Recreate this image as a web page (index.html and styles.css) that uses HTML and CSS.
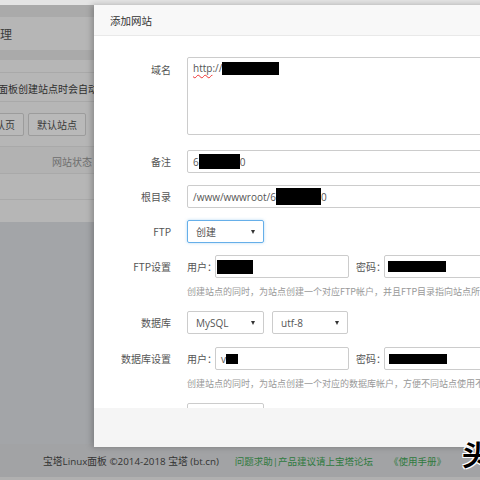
FILE: index.html
```html
<!DOCTYPE html>
<html>
<head>
<meta charset="utf-8">
<link rel="stylesheet" href="styles.css">
</head>
<body>
<div class="page">
  <div class="topstrip"></div>
  <div class="band"></div>
  <div class="titlebar"><span class="title">网站管理</span></div>
  <div class="band"></div>
  <div class="panel">
    <div class="prow p1"></div>
    <div class="prow p2"><span class="tip">宝塔面板创建站点时会自动创建默认页</span></div>
    <div class="prow p3"><span class="pbtn b1">默认页</span><span class="pbtn">默认站点</span></div>
    <div class="prow p4"><span class="th">网站状态</span></div>
    <div class="prow p5"></div>
    <div class="prow p6"></div>
  </div>
  <div class="rest"></div>
  <div class="footer">
    <span class="copy">宝塔Linux面板 ©2014-2018 宝塔 (bt.cn)</span>
    <span class="link l1">问题求助|产品建议请上宝塔论坛</span>
    <span class="link l2">《使用手册》</span>
  </div>
</div>

<div class="modal">
  <div class="mhead">添加网站</div>
  <div class="mbody">
    <div class="row r-ta">
      <label>域名</label>
      <div class="ta"><span class="spell">http</span>://<span class="redact rd-dom"></span></div>
    </div>
    <div class="row r-15">
      <label>备注</label>
      <div class="inp wide">6<span class="redact rd-ps"></span>0</div>
    </div>
    <div class="row">
      <label>根目录</label>
      <div class="inp wide">/www/wwwroot/6<span class="redact rd-path"></span>0</div>
    </div>
    <div class="row">
      <label>FTP</label>
      <div class="sel focus">创建<i class="arrow"></i></div>
    </div>
    <div class="row r-top">
      <label class="lt">FTP设置</label>
      <div class="field">
        <div class="pair">
          <span class="pl">用户：</span>
          <div class="inp user"><span class="redact rd-fu"></span></div>
          <span class="pl pw">密码：</span>
          <div class="inp pass"><span class="redact rd-fp"></span></div>
        </div>
        <div class="help">创建站点的同时，为站点创建一个对应FTP帐户，并且FTP目录指向站点所在目录</div>
      </div>
    </div>
    <div class="row r-13">
      <label>数据库</label>
      <div class="pair">
        <div class="sel">MySQL<i class="arrow"></i></div>
        <div class="sel s2">utf-8<i class="arrow"></i></div>
      </div>
    </div>
    <div class="row r-top">
      <label class="lt">数据库设置</label>
      <div class="field">
        <div class="pair">
          <span class="pl">用户：</span>
          <div class="inp user">v<span class="redact rd-du"></span></div>
          <span class="pl pw">密码：</span>
          <div class="inp pass"><span class="redact rd-dp"></span></div>
        </div>
        <div class="help">创建站点的同时，为站点创建一个对应的数据库帐户，方便不同站点使用不同数据库</div>
      </div>
    </div>
    <div class="row">
      <label class="lcut">PHP版本</label>
      <div class="sel">PHP-56<i class="arrow"></i></div>
    </div>
  </div>
  <div class="mfoot"></div>
</div>

<div class="wm">头</div>
</body>
</html>
```

FILE: styles.css
```css
html, body {
  margin: 0;
  padding: 0;
  width: 480px;
  height: 480px;
  overflow: hidden;
}
body {
  font-family: "Open Sans", "Noto Sans CJK SC", sans-serif;
  background: #a3a5a8;
  position: relative;
}
.page {
  display: flex;
  flex-direction: column;
  height: 480px;
}
.topstrip { height: 5px; background: #e4e4e4; }
.band { height: 12px; background: #aaaaaa; }
.band + .titlebar + .band { height: 10px; }
.titlebar {
  height: 33px;
  background: #b6b6b6;
  display: flex;
  align-items: center;
  font-size: 12px;
  color: #3c3c3c;
  font-family: "Noto Sans CJK SC", sans-serif;
}
.title { margin-left: -36px; }
.panel {
  background: #b6b6b6;
  height: 162px;
  display: flex;
  flex-direction: column;
  font-family: "Noto Sans CJK SC", sans-serif;
}
.prow { border-bottom: 1px solid #a9a9a9; display: flex; align-items: center; }
.p1 { height: 12px; }
.p2 { height: 29px; font-size: 10px; color: #2f2f2f; padding-top: 3px; box-sizing: border-box; }
.tip { margin-left: -22px; white-space: nowrap; }
.p3 { height: 44px; gap: 4px; }
.pbtn {
  height: 21px;
  border: 1px solid #9c9c9c;
  border-radius: 2px;
  background: #b9b9b9;
  font-size: 10px;
  color: #3a3a3a;
  padding: 0 8px;
  display: flex;
  align-items: center;
}
.b1 { margin-left: -24px; }
.p4 { height: 27px; background: #b2b2b2; font-size: 10px; color: #6e6e6e; padding-top: 2px; box-sizing: border-box; }
.th { margin-left: 52px; }
.p5 { height: 25px; }
.p6 { height: 19px; border-bottom: none; }
.rest { flex: 1; background: #a3a5a8; }
.footer {
  height: 33px;
  background: #a2a3a5;
  border-bottom: 3px solid #b0b0b0;
  display: flex;
  align-items: center;
  font-size: 9.5px;
  font-family: "Open Sans", "Noto Sans CJK SC", sans-serif;
  white-space: nowrap;
}
.copy { margin-left: 43px; color: #333; font-size: 9.8px; }
.link { color: #2f7a3e; }
.l1 { margin-left: 16px; }
.l2 { margin-left: 16px; }

/* modal */
.modal {
  position: absolute;
  left: 94px;
  top: 5px;
  width: 430px;
  height: 442px;
  background: #fff;
  box-shadow: -2px 0 6px rgba(0,0,0,0.25);
  display: flex;
  flex-direction: column;
}
.mhead {
  height: 30px;
  background: #f8f8f8;
  border-bottom: 1px solid #e9e9e9;
  display: flex;
  align-items: center;
  padding-left: 16px;
  font-size: 10.5px;
  color: #333;
  font-family: "Noto Sans CJK SC", sans-serif;
  flex: none;
}
.mbody {
  height: 351px;
  padding-top: 21px;
  overflow: hidden;
  flex: none;
  font-size: 10px;
  color: #555;
}
.mfoot { flex: 1; background: #f5f5f5; }
.row {
  display: grid;
  grid-template-columns: 77px auto;
  column-gap: 16px;
  align-items: center;
  margin-bottom: 12px;
}
.r-ta { margin-bottom: 15px; align-items: start; }
.r-13 { margin-bottom: 13px; }
.r-top { align-items: start; }
.row label {
  text-align: right;
  font-size: 10px;
  color: #555;
  font-family: "Noto Sans CJK SC", sans-serif;
  white-space: nowrap;
}
.r-ta label { padding-top: 5px; }
.row label.lt { line-height: 23px; }
.ta {
  width: 320px;
  border: 1px solid #ccc;
  border-radius: 2px;
  padding: 3px 5px;
  box-sizing: border-box;
  height: 78px;
  display: flex;
  align-items: flex-start;
  line-height: 14px;
}
.spell { text-decoration: underline wavy #e33; text-decoration-thickness: 1px; text-underline-offset: 2px; }
.inp {
  height: 23px;
  border: 1px solid #ccc;
  border-radius: 2px;
  box-sizing: border-box;
  padding: 0 5px;
  display: flex;
  align-items: center;
  white-space: nowrap;
}
.wide { width: 320px; }
.redact { display: inline-block; background: #000; }
.rd-dom { width: 57px; height: 13px; margin-top: 1px; }
.rd-ps { width: 41px; height: 15px; }
.rd-path { width: 45px; height: 17px; }
.rd-fu { width: 36px; height: 14px; margin-left: -4px; }
.rd-fp { width: 58px; height: 11px; margin-left: -2px; }
.rd-du { width: 12px; height: 10px; margin-left: 0px; }
.rd-dp { width: 58px; height: 10px; margin-left: -1px; }
.sel {
  width: 77px;
  height: 23px;
  border: 1px solid #ccc;
  border-radius: 2px;
  box-sizing: border-box;
  padding: 0 8px;
  display: flex;
  align-items: center;
  justify-content: space-between;
  font-family: "Open Sans", "Noto Sans CJK SC", sans-serif;
}
.sel.focus { border-color: #66afe9; box-shadow: 0 0 3px rgba(102,175,233,0.5); }
.s2 { width: 76px; margin-left: 8px; }
.arrow {
  width: 0;
  height: 0;
  border-left: 2.5px solid transparent;
  border-right: 2.5px solid transparent;
  border-top: 4px solid #333;
}
.pair { display: flex; align-items: center; }
.pl { font-family: "Noto Sans CJK SC", sans-serif; width: 28px; white-space: nowrap; }
.pw { margin-left: 7px; width: 28px; }
.user { width: 134px; }
.pass { width: 150px; }
.help {
  margin-top: 7px;
  line-height: 14px;
  font-size: 9px;
  color: #999;
  white-space: nowrap;
  font-family: "Noto Sans CJK SC", sans-serif;
}
.wm {
  position: absolute;
  left: 462px;
  top: 440px;
  font-size: 28px;
  font-weight: bold;
  color: #000;
  font-family: "Noto Sans CJK SC", sans-serif;
  text-shadow: -1px -1px 0 #fff, 1px -1px 0 #fff, -1px 1px 0 #fff, 1px 1px 0 #fff;
  line-height: 1;
}
```
